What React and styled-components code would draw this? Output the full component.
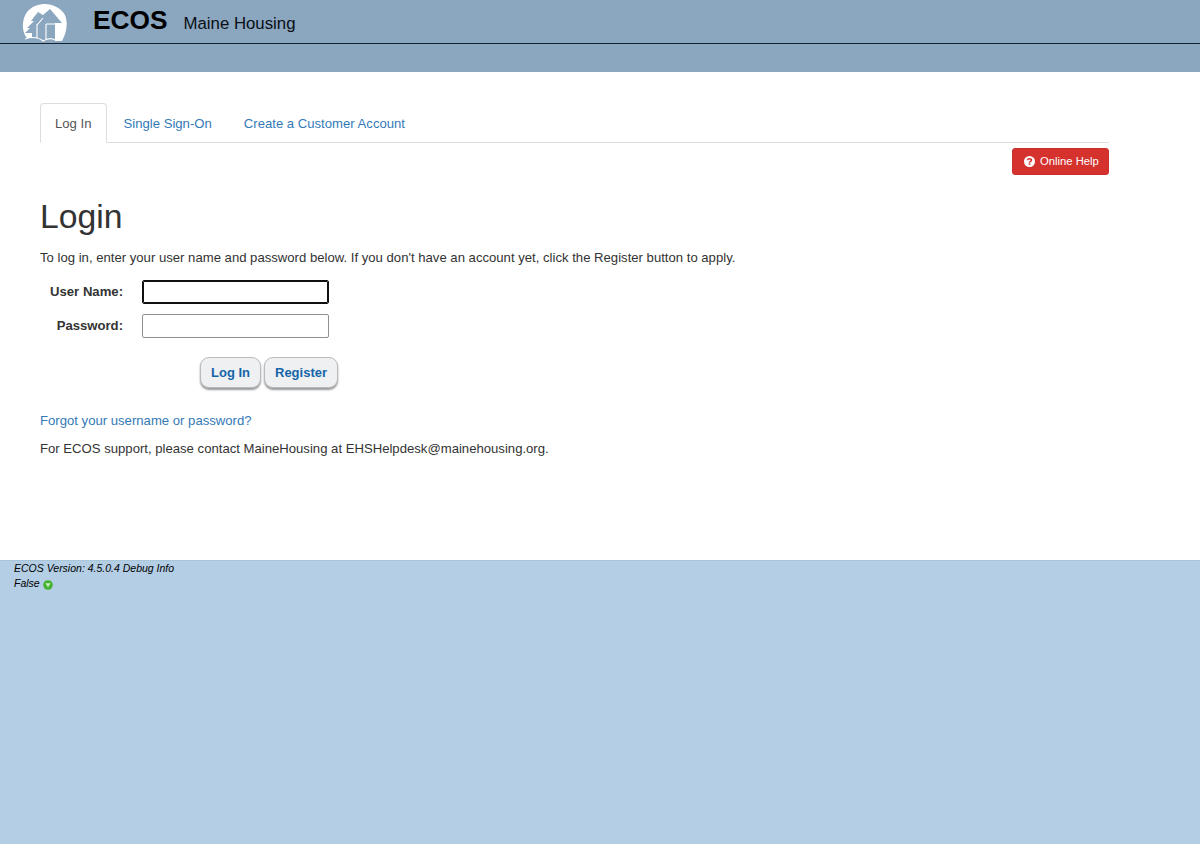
import styled, { createGlobalStyle } from 'styled-components';

const GlobalStyle = createGlobalStyle`
  html, body {
    margin: 0;
    padding: 0;
    background: #b3cee5;
    font-family: "Liberation Sans", Arial, sans-serif;
    font-size: 13.13px;
    line-height: 20px;
    color: #333;
  }
`;

const Page = styled.div`
  width: 1200px;
  height: 844px;
  display: flex;
  flex-direction: column;
  overflow: hidden;
`;

const Banner = styled.header`
  height: 72px;
  background: #8ba6bf;
  box-sizing: border-box;
`;

const BrandRow = styled.div`
  height: 44px;
  box-sizing: border-box;
  border-bottom: 1px solid #10222f;
  display: flex;
  align-items: flex-start;
  padding-left: 22px;
`;

const LogoWrap = styled.div`
  width: 46px;
  height: 43px;
  margin-right: 25px;
  svg { display: block; }
`;

const Product = styled.div`
  font-size: 26.3px;
  line-height: 40px;
  font-weight: 700;
  color: #000;
  margin-right: 16px;
`;

const Agency = styled.div`
  font-size: 16.8px;
  line-height: 47px;
  color: #0a0f14;
`;

const Main = styled.main`
  height: 488px;
  background: #fff;
  box-sizing: border-box;
  padding: 31px 91px 0 40px;
`;

const Tabs = styled.nav`
  display: flex;
  height: 39px;
  border-bottom: 1px solid #ddd;
`;

const Tab = styled.a`
  box-sizing: border-box;
  height: 40px;
  padding: 10px 14px;
  margin-right: 2px;
  border: 1px solid ${p => (p.$active ? '#ddd' : 'transparent')};
  border-bottom-color: ${p => (p.$active ? '#fff' : 'transparent')};
  border-radius: 4px 4px 0 0;
  background: ${p => (p.$active ? '#fff' : 'transparent')};
  color: ${p => (p.$active ? '#555' : '#337ab7')};
  font-size: 13.13px;
  line-height: 20px;
`;

const HelpRow = styled.div`
  display: flex;
  justify-content: flex-end;
  padding-top: 5px;
`;

const HelpButton = styled.a`
  box-sizing: border-box;
  width: 97px;
  height: 27px;
  padding: 0 0 1px 2px;
  background: #d5322e;
  border: 1px solid #c9302c;
  border-radius: 3px;
  color: #fff;
  font-size: 11.25px;
  line-height: 18px;
  display: flex;
  align-items: center;
  justify-content: center;
  gap: 5px;
  svg { display: block; }
`;

const Title = styled.h2`
  margin: 21px 0 0;
  font-size: 33.7px;
  line-height: 40px;
  font-weight: 400;
  color: #333;
`;

const Intro = styled.p`
  margin: 12px 0 0;
`;

const LoginForm = styled.form`
  margin-top: 12px;
  display: flex;
  flex-direction: column;
  gap: 10px;
`;

const FieldRow = styled.div`
  display: flex;
  align-items: center;
  height: 24px;
`;

const FieldLabel = styled.label`
  width: 83px;
  text-align: right;
  font-weight: 700;
  color: #333;
  white-space: nowrap;
`;

const TextInput = styled.input`
  box-sizing: border-box;
  width: 187px;
  height: 24px;
  margin-left: 19px;
  padding: 1px 4px;
  background: #fff;
  border: 1px solid ${p => (p.$focused ? '#101010' : '#8f8f8f')};
  outline: ${p => (p.$focused ? '1px solid #101010' : 'none')};
  outline-offset: -2px;
  border-radius: 2px;
`;

const ButtonRow = styled.div`
  display: flex;
  gap: 3px;
  margin: 9px 0 0 160px;
`;

const FormButton = styled.button`
  box-sizing: border-box;
  height: 31px;
  padding: 0 10px;
  background: #eef0f2;
  border: 1px solid #b9bcbf;
  border-radius: 9px;
  box-shadow: 0 2px 2px #999;
  color: #1565a8;
  font-family: inherit;
  font-size: 13px;
  font-weight: 700;
`;

const Forgot = styled.a`
  display: block;
  margin-top: 23px;
  color: #337ab7;
`;

const Support = styled.p`
  margin: 8px 0 0;
`;

const Footer = styled.footer`
  flex: 1;
  background: #b3cee5;
  border-top: 1px solid #a9c6d8;
  padding: 0 14px;
  font-size: 10.5px;
  line-height: 15px;
  font-style: italic;
  color: #000;
`;

const StatusLine = styled.div`
  display: flex;
  align-items: center;
  gap: 3px;
  svg { display: block; margin-top: 2px; }
`;

const Logo = () => (
  <svg width="46" height="43" viewBox="0 0 46 43">
    <path
      fill="#fff"
      d="M5 38 C-1 31 0 19 5 12 C10 6 17 4 23 4 C31 4 39 8 43 15 C46 23 45 32 40 41 L33 41 L33 23 L40 23 L28 9 L21 15 L16 12 L9 21 L12 21 L5 28 L8 28 L3 33 L10 33 L10 38 Z"
    />
    <path
      fill="none"
      stroke="#fff"
      strokeWidth="1.1"
      d="M3 39 C9 37 16 37 21 41 C26 38 30 38 33 40 M15 24 L15 38 M21 18 L15 25 M24 24 L33 24 M24 24 L24 39"
    />
  </svg>
);

const QuestionIcon = () => (
  <svg width="11" height="11" viewBox="0 0 12 12">
    <circle cx="6" cy="6" r="6" fill="#fff" />
    <path
      fill="none"
      stroke="#d5322e"
      strokeWidth="1.7"
      d="M3.9 4.6 C4 3.4 4.9 2.9 6 2.9 C7.2 2.9 8.1 3.5 8.1 4.5 C8.1 5.8 6 5.8 6 7.3"
    />
    <rect x="5.1" y="8" width="1.8" height="1.6" fill="#d5322e" />
  </svg>
);

const StatusIcon = () => (
  <svg width="10" height="10" viewBox="0 0 10 10">
    <circle cx="5" cy="5" r="4.8" fill="#45b332" />
    <path d="M2.4 3.2 H7.6 L5 7.2 Z" fill="#c9f0c0" />
  </svg>
);

export default function App() {
  return (
    <>
      <GlobalStyle />
      <Page>
        <Banner>
          <BrandRow>
            <LogoWrap>
              <Logo />
            </LogoWrap>
            <Product>ECOS</Product>
            <Agency>Maine Housing</Agency>
          </BrandRow>
        </Banner>
        <Main>
          <Tabs>
            <Tab $active>Log In</Tab>
            <Tab>Single Sign-On</Tab>
            <Tab>Create a Customer Account</Tab>
          </Tabs>
          <HelpRow>
            <HelpButton>
              <QuestionIcon />
              Online Help
            </HelpButton>
          </HelpRow>
          <Title>Login</Title>
          <Intro>
            To log in, enter your user name and password below. If you don't have an account yet, click the Register button to apply.
          </Intro>
          <LoginForm>
            <FieldRow>
              <FieldLabel>User Name:</FieldLabel>
              <TextInput $focused />
            </FieldRow>
            <FieldRow>
              <FieldLabel>Password:</FieldLabel>
              <TextInput type="password" />
            </FieldRow>
            <ButtonRow>
              <FormButton type="button">Log In</FormButton>
              <FormButton type="button">Register</FormButton>
            </ButtonRow>
          </LoginForm>
          <Forgot>Forgot your username or password?</Forgot>
          <Support>For ECOS support, please contact MaineHousing at EHSHelpdesk@mainehousing.org.</Support>
        </Main>
        <Footer>
          <div>ECOS Version: 4.5.0.4 Debug Info</div>
          <StatusLine>
            False <StatusIcon />
          </StatusLine>
        </Footer>
      </Page>
    </>
  );
}
